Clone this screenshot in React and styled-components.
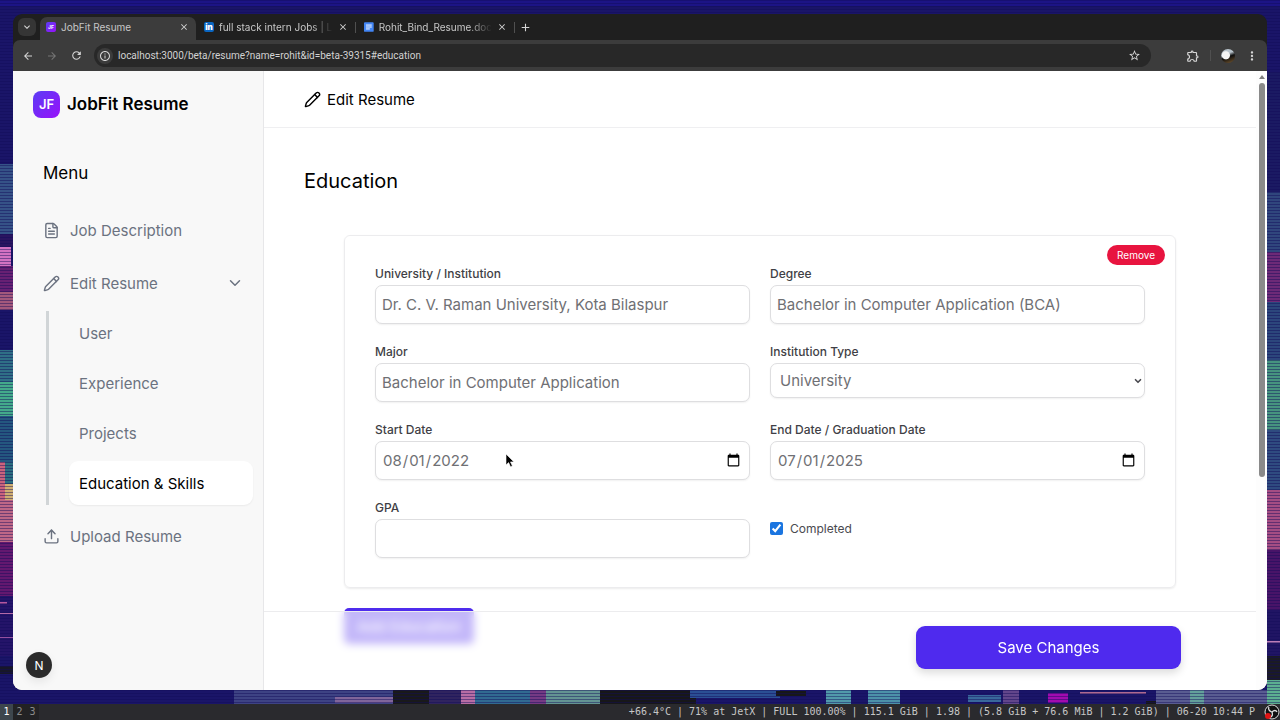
import React, { useState } from "react";
import styled, { createGlobalStyle } from "styled-components";
import { ChevronDown, FileText, Pencil, Upload } from "lucide-react";
import {
  MdAdd,
  MdArrowBack,
  MdArrowForward,
  MdClose,
  MdInfoOutline,
  MdKeyboardArrowDown,
  MdMoreVert,
  MdOutlineExtension,
  MdRefresh,
  MdStarBorder,
} from "react-icons/md";

const GlobalStyle = createGlobalStyle`
  * {
    box-sizing: border-box;
  }
  body {
    margin: 0;
    font-family: Inter, "Liberation Sans", sans-serif;
  }
  button, input, select {
    font-family: inherit;
  }
`;

const sections = ["User", "Experience", "Projects", "Education & Skills"];

// [x, y, width, height, colour]
const patches = [
  [0, 0, 1280, 720, "#1a1568"],
  [0, 0, 1280, 6, "#1c1486"],
  [0, 164, 13, 72, "#355287"],
  [0, 234, 13, 13, "#2a1460"],
  [0, 247, 11, 19, "#d472c2"],
  [0, 266, 13, 26, "#672073"],
  [0, 292, 13, 18, "#a2587c"],
  [0, 350, 13, 32, "#2f6f86"],
  [0, 382, 13, 34, "#43a98b"],
  [0, 416, 13, 46, "#24577f"],
  [0, 462, 5, 40, "#c9637c"],
  [5, 462, 8, 22, "#2c6f80"],
  [5, 484, 8, 16, "#cfae72"],
  [0, 500, 13, 42, "#bd6786"],
  [0, 542, 13, 54, "#63186f"],
  [0, 596, 13, 60, "#241469"],
  [0, 602, 7, 2, "#b5579f"],
  [0, 613, 13, 1, "#b56aa8"],
  [0, 637, 13, 1, "#9450a0"],
  [0, 666, 13, 8, "#171729"],
  [1267, 72, 13, 120, "#1b1a63"],
  [1267, 192, 13, 60, "#30467d"],
  [1267, 252, 13, 50, "#6d2a77"],
  [1267, 302, 13, 58, "#2c467c"],
  [1267, 360, 13, 70, "#46937f"],
  [1267, 430, 13, 60, "#2f4b80"],
  [1267, 490, 13, 60, "#a44d83"],
  [1267, 550, 13, 60, "#481468"],
  [1267, 610, 13, 46, "#201564"],
  [1267, 641, 13, 2, "#bb7db7"],
  [1267, 656, 13, 24, "#1b1b24"],
  [1267, 680, 13, 24, "#5caf91"],
  [234, 690, 160, 14, "#3e4384"],
  [335, 697, 58, 6, "#80659a"],
  [393, 690, 36, 14, "#19191b"],
  [429, 690, 32, 14, "#30245f"],
  [461, 690, 14, 14, "#b76da4"],
  [475, 690, 55, 14, "#316a91"],
  [530, 690, 16, 14, "#753a84"],
  [546, 690, 54, 14, "#639392"],
  [600, 690, 96, 14, "#171719"],
  [690, 690, 90, 8, "#2b4f94"],
  [776, 691, 30, 5, "#171719"],
  [826, 690, 25, 14, "#5199aa"],
  [868, 690, 32, 14, "#4c91a9"],
  [968, 695, 33, 7, "#39689b"],
  [1003, 690, 16, 14, "#62468b"],
  [1048, 693, 20, 10, "#a10bb0"],
  [1080, 692, 66, 2, "#ad6a91"],
  [1146, 701, 10, 3, "#171719"],
  [1156, 690, 111, 14, "#595c91"],
  [1190, 690, 14, 14, "#63a09b"],
];

const Wallpaper = () => (
  <Backdrop viewBox="0 0 1280 720" preserveAspectRatio="none" aria-hidden="true">
    <defs>
      <pattern id="scan" width="4" height="3" patternUnits="userSpaceOnUse">
        <rect width="4" height="1" fill="#110a58" opacity=".45" />
      </pattern>
    </defs>
    {patches.map(([x, y, width, height, fill], i) => (
      <rect key={i} x={x} y={y} width={width} height={height} fill={fill} />
    ))}
    <rect width="1280" height="720" fill="url(#scan)" />
  </Backdrop>
);

const LinkedinMark = () => (
  <Favicon $bg="#0a66c2">
    <b>in</b>
  </Favicon>
);

const DocsMark = () => (
  <svg width="10" height="10" viewBox="0 0 10 10" aria-hidden="true">
    <rect width="10" height="10" rx="1" fill="#4285f4" />
    <path d="M2 3h6M2 5h6M2 7h4" stroke="#fff" strokeWidth="1" />
  </svg>
);

const BrowserTab = ({ icon, title, active, width }) => (
  <Tab $active={active} $width={width}>
    {icon}
    <TabTitle $fade={!active}>{title}</TabTitle>
    <IconButton aria-label={`Close ${title}`}>
      <MdClose size={10} />
    </IconButton>
  </Tab>
);

const Field = ({ id, label, ...rest }) => (
  <FieldWrap>
    <Label htmlFor={id}>{label}</Label>
    <Input id={id} {...rest} />
  </FieldWrap>
);

const App = () => {
  const [active, setActive] = useState("Education & Skills");
  const [form, setForm] = useState({
    start: "2022-08-01",
    end: "2025-07-01",
    gpa: "",
    type: "University",
    completed: true,
  });

  const update = (key) => (e) => setForm({ ...form, [key]: e.target.value });

  return (
    <Desktop>
      <GlobalStyle />
      <Wallpaper />
      <WindowArea>
        <Window>
          <TabStrip>
            <TabSearch aria-label="Search tabs">
              <MdKeyboardArrowDown size={12} />
            </TabSearch>
            <BrowserTab
              active
              width={156}
              title="JobFit Resume"
              icon={
                <Favicon $bg="linear-gradient(135deg, #5b3df5, #9810fa)">
                  JF
                </Favicon>
              }
            />
            <BrowserTab
              width={159}
              title="full stack intern Jobs | L"
              icon={<LinkedinMark />}
            />
            <Divider />
            <BrowserTab width={158} title="Rohit_Bind_Resume.doc" icon={<DocsMark />} />
            <Divider />
            <IconButton aria-label="New tab">
              <MdAdd size={13} />
            </IconButton>
          </TabStrip>
          <Toolbar>
            <ToolButton aria-label="Back">
              <MdArrowBack size={12} />
            </ToolButton>
            <ToolButton aria-label="Forward" disabled>
              <MdArrowForward size={12} />
            </ToolButton>
            <ToolButton aria-label="Reload">
              <MdRefresh size={13} />
            </ToolButton>
            <Omnibox>
              <SiteInfo aria-label="Site information">
                <MdInfoOutline size={12} />
              </SiteInfo>
              <Address
                aria-label="Address"
                defaultValue="localhost:3000/beta/resume?name=rohit&id=beta-39315#education"
              />
              <IconButton aria-label="Bookmark">
                <MdStarBorder size={13} />
              </IconButton>
            </Omnibox>
            <Actions>
              <IconButton aria-label="Extensions">
                <MdOutlineExtension size={14} />
              </IconButton>
              <Divider />
              <Avatar />
              <IconButton aria-label="More">
                <MdMoreVert size={14} />
              </IconButton>
            </Actions>
          </Toolbar>

          <Page>
            <Sidebar>
              <Brand>
                <Logo>JF</Logo>
                JobFit Resume
              </Brand>
              <MenuTitle>Menu</MenuTitle>
              <Nav>
                <NavItem href="#job">
                  <FileText size={17} />
                  Job Description
                </NavItem>
                <Group>
                  <NavItem href="#edit">
                    <Pencil size={17} />
                    Edit Resume
                    <ChevronDown size={18} />
                  </NavItem>
                  <SubMenu>
                    {sections.map((name) => (
                      <SubItem
                        key={name}
                        href="#education"
                        $active={name === active}
                        onClick={() => setActive(name)}
                      >
                        {name}
                      </SubItem>
                    ))}
                  </SubMenu>
                </Group>
                <NavItem href="#upload">
                  <Upload size={17} />
                  Upload Resume
                </NavItem>
              </Nav>
              <DevBadge aria-label="Open developer tools">N</DevBadge>
            </Sidebar>

            <Main>
              <Header>
                <Pencil size={17} />
                Edit Resume
              </Header>
              <Content>
                <Title>Education</Title>
                <Section>
                  <Card>
                    <Remove type="button">Remove</Remove>
                    <Field
                      id="school"
                      label="University / Institution"
                      defaultValue="Dr. C. V. Raman University, Kota Bilaspur"
                    />
                    <Field
                      id="degree"
                      label="Degree"
                      defaultValue="Bachelor in Computer Application (BCA)"
                    />
                    <Field
                      id="major"
                      label="Major"
                      defaultValue="Bachelor in Computer Application"
                    />
                    <FieldWrap>
                      <Label htmlFor="type">Institution Type</Label>
                      <SelectWrap>
                        <Select id="type" value={form.type} onChange={update("type")}>
                          <option>University</option>
                          <option>College</option>
                          <option>School</option>
                        </Select>
                        <ChevronDown size={10} strokeWidth={4} />
                      </SelectWrap>
                    </FieldWrap>
                    <Field
                      id="start"
                      label="Start Date"
                      type="date"
                      value={form.start}
                      onChange={update("start")}
                    />
                    <Field
                      id="end"
                      label="End Date / Graduation Date"
                      type="date"
                      value={form.end}
                      onChange={update("end")}
                    />
                    <Field id="gpa" label="GPA" value={form.gpa} onChange={update("gpa")} />
                    <CheckLabel>
                      <input
                        type="checkbox"
                        checked={form.completed}
                        onChange={(e) => setForm({ ...form, completed: e.target.checked })}
                      />
                      Completed
                    </CheckLabel>
                  </Card>
                  <AddButton type="button">Add Education</AddButton>
                </Section>
              </Content>
              <Footer>
                <Save type="submit">Save Changes</Save>
              </Footer>
            </Main>

            <Scrollbar>
              <svg width="6" height="4" viewBox="0 0 6 4" aria-hidden="true">
                <path d="M3 0l3 4H0z" fill="#7f7f7f" />
              </svg>
              <Thumb />
            </Scrollbar>
          </Page>
        </Window>
      </WindowArea>

      <StatusBar>
        <Workspaces>
          <Workspace $active>1</Workspace>
          <Workspace>2</Workspace>
          <Workspace>3</Workspace>
        </Workspaces>
        <Stats>
          +66.4°C | 71% at JetX | FULL 100.00% | 115.1 GiB | 1.98 | (5.8 GiB +
          76.6 MiB | 1.2 GiB) | 06-20 10:44 P
        </Stats>
        <svg width="16" height="16" viewBox="0 0 16 16" aria-hidden="true">
          <circle cx="8" cy="8" r="7" fill="#111" stroke="#ddd" strokeWidth="1" />
          <path
            d="M8 8C5 7 4 5 5 3M8 8c2-2 4-2 5 0M8 8c1 3 0 5-2 5"
            fill="none"
            stroke="#ddd"
            strokeWidth="1.3"
          />
          <circle cx="4" cy="12" r="3" fill="#e01414" />
        </svg>
      </StatusBar>

      <Cursor width="10" height="15" viewBox="0 0 10 15" aria-hidden="true">
        <path
          d="M1 1v11l2.600-2.400 1.900 4.100 1.900-.8-1.900-4h3.500z"
          fill="#000"
          stroke="#fff"
          strokeWidth=".6"
        />
      </Cursor>
    </Desktop>
  );
};

const Desktop = styled.div`
  position: relative;
  display: flex;
  flex-direction: column;
  height: 100vh;
  overflow: hidden;
  background: #1a1568;
`;

const Backdrop = styled.svg`
  position: absolute;
  inset: 0;
  width: 100%;
  height: 100%;
`;

const WindowArea = styled.div`
  position: relative;
  flex: 1;
  min-height: 0;
  display: flex;
  padding: 14px 13px;
`;

const Window = styled.div`
  flex: 1;
  min-width: 0;
  display: flex;
  flex-direction: column;
  overflow: hidden;
  border-radius: 9px;
  background: #1f1f1f;
`;

const TabStrip = styled.div`
  display: flex;
  align-items: center;
  height: 26px;
  padding: 0 5px;
  color: #c7c7c7;
`;

const IconButton = styled.button`
  display: flex;
  align-items: center;
  justify-content: center;
  padding: 0;
  border: none;
  background: none;
  color: #d6d6d6;
`;

const TabSearch = styled(IconButton)`
  width: 18px;
  height: 18px;
  margin-right: 4px;
  border-radius: 6px;
  background: #353535;
`;

const Tab = styled.div`
  display: flex;
  align-self: flex-end;
  align-items: center;
  gap: 5px;
  width: ${(p) => p.$width}px;
  height: 23px;
  padding: 0 7px 3px ${(p) => (p.$active ? 6 : 8)}px;
  border-radius: 7px 7px 0 0;
  background: ${(p) => (p.$active ? "#3c3c3c" : "transparent")};
`;

const TabTitle = styled.span`
  flex: 1;
  font-size: 10px;
  line-height: 14px;
  white-space: nowrap;
  mask-image: ${(p) =>
    p.$fade ? "linear-gradient(90deg, #000 80%, transparent)" : "none"};
`;

const Favicon = styled.span`
  display: flex;
  align-items: center;
  justify-content: center;
  width: 10px;
  height: 10px;
  border-radius: 2px;
  background: ${(p) => p.$bg};
  color: #fff;
  font-size: 5px;
  font-weight: 700;

  b {
    font-size: 8px;
  }
`;

const Divider = styled.span`
  width: 1px;
  height: 11px;
  background: #505050;

  & + button {
    margin-left: 4px;
  }
`;

const Toolbar = styled.div`
  display: flex;
  align-items: center;
  height: 31px;
  padding: 0 8px 0 3px;
  border-radius: 7px 7px 0 0;
  background: #3c3c3c;
`;

const ToolButton = styled(IconButton)`
  width: 24px;
  height: 24px;

  &:disabled {
    color: #757575;
  }
`;

const Omnibox = styled.div`
  flex: 1;
  display: flex;
  align-items: center;
  gap: 5px;
  height: 23px;
  margin-left: 6px;
  padding: 0 10px 0 3px;
  border-radius: 12px;
  background: #282828;
`;

const SiteInfo = styled(IconButton)`
  width: 16px;
  height: 16px;
  border-radius: 8px;
  background: #3c3c3c;
`;

const Address = styled.input`
  flex: 1;
  min-width: 0;
  padding: 0;
  border: none;
  outline: none;
  background: none;
  color: #d2d2d2;
  font-family: Roboto, Inter, sans-serif;
  font-size: 10px;
`;

const Actions = styled.div`
  display: flex;
  align-items: center;
  justify-content: flex-end;
  gap: 10px;
  width: 108px;
`;

const Avatar = styled.span`
  width: 14px;
  height: 14px;
  border-radius: 7px;
  background:
    radial-gradient(circle at 35% 45%, #f4f4f4 30%, transparent 38%),
    linear-gradient(160deg, #b9c4cc 35%, #0d0d0d 55%, #7a5a30);
`;

const Page = styled.div`
  flex: 1;
  min-height: 0;
  display: flex;
  background: #fff;
`;

const Sidebar = styled.aside`
  position: relative;
  width: 251px;
  padding: 20px 10px 0 20px;
  border-right: 1px solid #e7e7e9;
  background: #f8f8f8;
`;

const Brand = styled.div`
  display: flex;
  align-items: center;
  gap: 7px;
  font-size: 17px;
  font-weight: 600;
  line-height: 27px;
`;

const Logo = styled.span`
  width: 27px;
  height: 27px;
  border-radius: 8px;
  background: linear-gradient(135deg, #5b3df5, #9810fa);
  color: #fff;
  font-size: 13px;
  text-align: center;
`;

const MenuTitle = styled.h2`
  margin: 43px 10px 23px;
  font-size: 17px;
  font-weight: 400;
  line-height: 24px;
`;

const Nav = styled.nav`
  display: flex;
  flex-direction: column;
  gap: 9px;
`;

const Group = styled.div`
  display: flex;
  flex-direction: column;
  gap: 6px;
`;

const NavItem = styled.a`
  display: flex;
  align-items: center;
  gap: 10px;
  height: 44px;
  padding: 0 9px 0 10px;
  color: #6b7280;
  font-size: 15px;
  text-decoration: none;

  svg:last-child:not(:first-child) {
    margin-left: auto;
  }
`;

const SubMenu = styled.div`
  display: flex;
  flex-direction: column;
  gap: 6px;
  margin-left: 13px;
  padding-left: 20px;
  border-left: 3px solid #d1d5d7;
`;

const SubItem = styled.a`
  height: 44px;
  padding: 0 10px;
  border-radius: 9px;
  background: ${(p) => (p.$active ? "#fff" : "transparent")};
  box-shadow: ${(p) => (p.$active ? "0 1px 2px rgba(0, 0, 0, 0.06)" : "none")};
  color: ${(p) => (p.$active ? "#000" : "#6b7280")};
  font-size: 15px;
  line-height: 45px;
  text-decoration: none;
`;

const DevBadge = styled.button`
  position: absolute;
  left: 13px;
  bottom: 12px;
  width: 26px;
  height: 26px;
  padding: 0;
  border: none;
  border-radius: 13px;
  background: #2b2b2b;
  box-shadow: 0 4px 10px rgba(0, 0, 0, 0.08);
  color: #fff;
  font-size: 12px;
`;

const Main = styled.main`
  position: relative;
  flex: 1;
  min-width: 0;
  overflow: hidden;
`;

const Header = styled.header`
  display: flex;
  align-items: center;
  gap: 6px;
  height: 57px;
  padding: 0 40px;
  border-bottom: 1px solid #efeff1;
  font-size: 15px;
`;

const Content = styled.div`
  padding: 38px 40px;
`;

const Title = styled.h1`
  margin: 0 0 39px;
  font-size: 20px;
  font-weight: 400;
  line-height: 30px;
`;

const Section = styled.form`
  display: flex;
  flex-direction: column;
  align-items: flex-start;
  gap: 20px;
  padding: 0 40px;
`;

const Card = styled.div`
  position: relative;
  display: grid;
  grid-template-columns: 1fr 1fr;
  gap: 18px 20px;
  width: 100%;
  padding: 28px 30px 29px;
  border: 1px solid #ececee;
  border-radius: 6px;
  box-shadow: 0 1px 2px rgba(0, 0, 0, 0.08);
`;

const Remove = styled.button`
  position: absolute;
  top: 9px;
  right: 10px;
  width: 58px;
  height: 20px;
  padding: 0;
  border: none;
  border-radius: 10px;
  background: #e8143f;
  color: #fff;
  font-size: 10px;
`;

const FieldWrap = styled.div`
  display: flex;
  flex-direction: column;
  gap: 1px;
`;

const Label = styled.label`
  color: #3f3f46;
  font-size: 12px;
  font-weight: 500;
  line-height: 20px;
`;

const Input = styled.input`
  width: 100%;
  height: 39px;
  padding: 0 6px;
  border: 1px solid #dedee0;
  border-radius: 7px;
  outline: none;
  background: #fff;
  box-shadow: 0 1px 2px rgba(0, 0, 0, 0.06);
  color: #6f7074;
  font-size: 15px;
`;

const SelectWrap = styled.div`
  position: relative;

  svg {
    position: absolute;
    top: 13px;
    right: 2px;
    color: #4a4a50;
    pointer-events: none;
  }
`;

const Select = styled.select`
  display: block;
  width: 100%;
  height: 35px;
  padding: 0 9px;
  border: 1px solid #dedee0;
  border-radius: 7px;
  appearance: none;
  background: #fff;
  box-shadow: 0 1px 2px rgba(0, 0, 0, 0.06);
  color: #6f7074;
  font-size: 15px;
`;

const CheckLabel = styled.label`
  display: flex;
  align-items: center;
  gap: 7px;
  color: #4a4a50;
  font-size: 12px;

  input {
    width: 13px;
    height: 13px;
    margin: 0;
    accent-color: #1a75e0;
  }
`;

const AddButton = styled.button`
  height: 36px;
  padding: 0 13px;
  border: none;
  border-radius: 5px;
  background: #4f2ced;
  color: #fff;
  font-size: 15px;
`;

const Footer = styled.footer`
  position: absolute;
  right: 0;
  bottom: 0;
  left: 0;
  display: flex;
  justify-content: flex-end;
  padding: 14px 75px 21px;
  border-top: 1px solid #ececee;
  background: rgba(255, 255, 255, 0.66);
  backdrop-filter: blur(4px);
`;

const Save = styled.button`
  width: 265px;
  height: 43px;
  border: none;
  border-radius: 9px;
  background: #4f2aee;
  box-shadow: 0 4px 9px rgba(0, 0, 0, 0.14);
  color: #fff;
  font-size: 15px;
`;

const Scrollbar = styled.div`
  display: flex;
  flex-direction: column;
  align-items: center;
  gap: 4px;
  width: 11px;
  padding-top: 4px;
  background: #fdfdfd;
`;

const Thumb = styled.div`
  width: 6px;
  height: 64%;
  border-radius: 3px;
  background: #8a8a8a;
`;

const StatusBar = styled.div`
  position: relative;
  display: flex;
  align-items: center;
  height: 16px;
  background: #2a2a2e;
  color: #c6c6c6;
  font-family: "DejaVu Sans Mono", "Liberation Mono", monospace;
  font-size: 10px;
  line-height: 15px;
`;

const Workspaces = styled.div`
  display: flex;
  flex: 1;
`;

const Workspace = styled.span`
  width: 13px;
  padding-bottom: 1px;
  background: ${(p) => (p.$active ? "#3d464d" : "#222224")};
  color: ${(p) => (p.$active ? "#fff" : "#8c8c8c")};
  text-align: center;
`;

const Stats = styled.span`
  margin-right: 9px;
  padding-bottom: 1px;
  white-space: nowrap;
`;

const Cursor = styled.svg`
  position: absolute;
  left: 505px;
  top: 453px;
`;

export default App;
